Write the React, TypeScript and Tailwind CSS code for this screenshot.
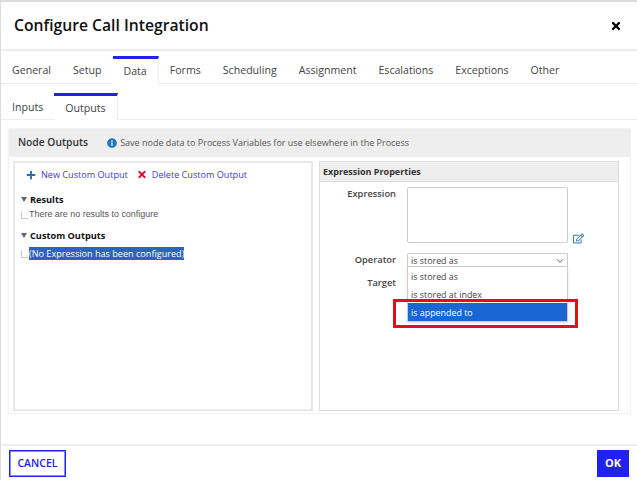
import { ChevronDown } from "lucide-react";
import { FaTimes, FaPlus, FaInfoCircle, FaRegEdit } from "react-icons/fa";

const OPEN = "font-['Open_Sans',sans-serif]";

const mainTabs = ["General", "Setup", "Data", "Forms", "Scheduling", "Assignment", "Escalations", "Exceptions", "Other"];
const subTabs = ["Inputs", "Outputs"];

function TabBar({
  tabs,
  active,
  height,
  activeHeight,
  idleHeight,
}: {
  tabs: string[];
  active: string;
  height: string;
  activeHeight: string;
  idleHeight: string;
}) {
  return (
    <div className={`flex flex-none items-end border-b border-[#eeeeee] ${height}`}>
      {tabs.map((tab) =>
        tab === active ? (
          <div
            key={tab}
            className={`relative -mb-px flex items-center border-t-[3px] border-r border-t-[#2222ee] border-r-[#eeeeee] bg-white px-[11px] text-[10.6px] text-[#444444] ${activeHeight}`}
          >
            {tab}
          </div>
        ) : (
          <div key={tab} className={`flex items-center px-[11px] text-[10.6px] text-[#444444] ${idleHeight}`}>
            {tab}
          </div>
        )
      )}
    </div>
  );
}

function Caret() {
  return <span className="mr-[3px] inline-block h-0 w-0 border-x-[3px] border-t-[5px] border-x-transparent border-t-[#666666]" />;
}

function Elbow() {
  return <span className="mr-px inline-block h-[8px] w-[7px] flex-none border-b border-l border-[#cccccc]" />;
}

export default function App() {
  return (
    <div className={`flex h-[480px] w-[637px] flex-col overflow-hidden border-t-2 border-l border-[#dddddd] bg-white ${OPEN}`}>
      <div className="flex h-[49px] flex-none items-center justify-between border-b-2 border-[#eeeeee] pt-[1px] pr-[16px] pl-[13px]">
        <h1 className="text-[15.7px] font-semibold text-[#111111]">Configure Call Integration</h1>
        <FaTimes className="h-[12px] w-[10px] text-black" />
      </div>

      <TabBar tabs={mainTabs} active="Data" height="h-[33px]" activeHeight="h-[28px]" idleHeight="h-[24px]" />
      <TabBar tabs={subTabs} active="Outputs" height="h-[36px]" activeHeight="h-[27px] pt-[1px]" idleHeight="h-[22px]" />

      <div className="flex-1 px-[7px] pt-[8px]">
        <div className="flex h-[286px] w-[623px] flex-col border border-[#f2f2f2]">
          <div className="flex h-[28px] flex-none items-center bg-[#eeeeee] pl-[9px] text-[#333333]">
            <span className="text-[10.3px] font-semibold">Node Outputs</span>
            <FaInfoCircle className="mr-[3px] ml-[19px] h-[10px] w-[10px] text-[#2277bb]" />
            <span className="text-[9px] text-[#555555]">Save node data to Process Variables for use elsewhere in the Process</span>
          </div>

          <div className="flex flex-1 gap-[6px] pt-[4px] pl-[4px]">
            <div className="h-[250px] w-[300px] border-2 border-[#e8e8e8] px-[6px] py-[5px]">
              <div className="flex items-center pl-[5px] text-[9.1px] text-[#3a3aee]">
                <FaPlus className="mr-[5px] h-[10px] w-[10px] text-[#2a6cb0]" />
                <span className="mr-[9px]">New Custom Output</span>
                <FaTimes className="mr-[5px] h-[11px] w-[10px] text-[#dd1133]" />
                <span>Delete Custom Output</span>
              </div>

              <div className="mt-[11px] flex h-[14px] items-center text-[9.2px] font-bold text-[#111111]">
                <Caret />
                <span>Results</span>
              </div>
              <div className="mt-[1px] flex h-[14px] items-center font-['Liberation_Sans',sans-serif] text-[8.95px] text-[#555555]">
                <Elbow />
                <span>There are no results to configure</span>
              </div>

              <div className="mt-[7px] flex h-[14px] items-center text-[9.2px] font-bold text-[#111111]">
                <Caret />
                <span>Custom Outputs</span>
              </div>
              <div className="mt-[4px] flex h-[14px] items-center">
                <Elbow />
                <span className="bg-[#2b62c4] text-[9.1px] leading-[13px] text-white">(No Expression has been configured)</span>
              </div>
            </div>

            <div className="h-[250px] w-[300px] border border-[#dddddd]">
              <div className="flex h-[20px] items-center border-b border-[#dddddd] bg-[#eeeeee] pl-[3px] text-[9px] font-bold text-[#333333]">
                Expression Properties
              </div>

              <div className="relative pt-[5px]">
                <div className="flex">
                  <span className="w-[76px] text-right text-[9.3px] font-semibold text-[#444444]">Expression</span>
                  <div className="ml-[11px] h-[56px] w-[161px] rounded-[2px] border border-[#cccccc] bg-white" />
                  <FaRegEdit className="mt-[46px] ml-[5px] h-[11px] w-[11px] text-[#2a7ab8]" />
                </div>

                <div className="mt-[9px] flex">
                  <span className="w-[76px] text-right text-[9.3px] font-semibold text-[#444444]">Operator</span>
                  <div className="ml-[11px] flex h-[14px] w-[161px] items-center justify-between rounded-t-[2px] border border-b-0 border-[#cccccc] pt-[1px] pr-[2px] pl-[3px] text-[8.9px] text-[#444444]">
                    <span>is stored as</span>
                    <ChevronDown className="h-[10px] w-[10px] text-[#444444]" strokeWidth={2} />
                  </div>
                </div>

                <div className="mt-[9px] w-[76px] text-right text-[9.3px] font-semibold text-[#444444]">Target</div>

                {/* open dropdown list */}
                <div className="absolute top-[84px] left-[87px] w-[161px] border border-[#cccccc] bg-white text-[8.9px] text-[#444444] shadow-sm">
                  <div className="flex h-[18px] items-center pt-[1px] pl-[3px]">is stored as</div>
                  <div className="flex h-[18px] items-center pt-[1px] pl-[3px]">is stored at index</div>
                  <div className="flex h-[18px] items-center bg-[#1a66d2] pt-[1px] pl-[3px] text-white">is appended to</div>
                </div>

                {/* red highlight around the option */}
                <div className="absolute top-[117px] left-[73px] h-[29px] w-[185px] border-[3px] border-[#e0101a]" />
              </div>
            </div>
          </div>
        </div>
      </div>

      <div className="flex h-[36px] flex-none items-start justify-between border-t-2 border-[#eeeeee] pt-[4px] pr-[8px] pl-[8px]">
        <button className="flex h-[27px] w-[57px] items-center justify-center border border-[#2222ee] bg-white pt-[1px] text-[10.5px] font-semibold text-[#2222ee] outline outline-1 -outline-offset-2 outline-[#8888ff]">
          CANCEL
        </button>
        <button className="flex h-[27px] w-[32px] items-center justify-center bg-[#2222ee] text-[11px] font-bold text-white">
          OK
        </button>
      </div>
    </div>
  );
}
